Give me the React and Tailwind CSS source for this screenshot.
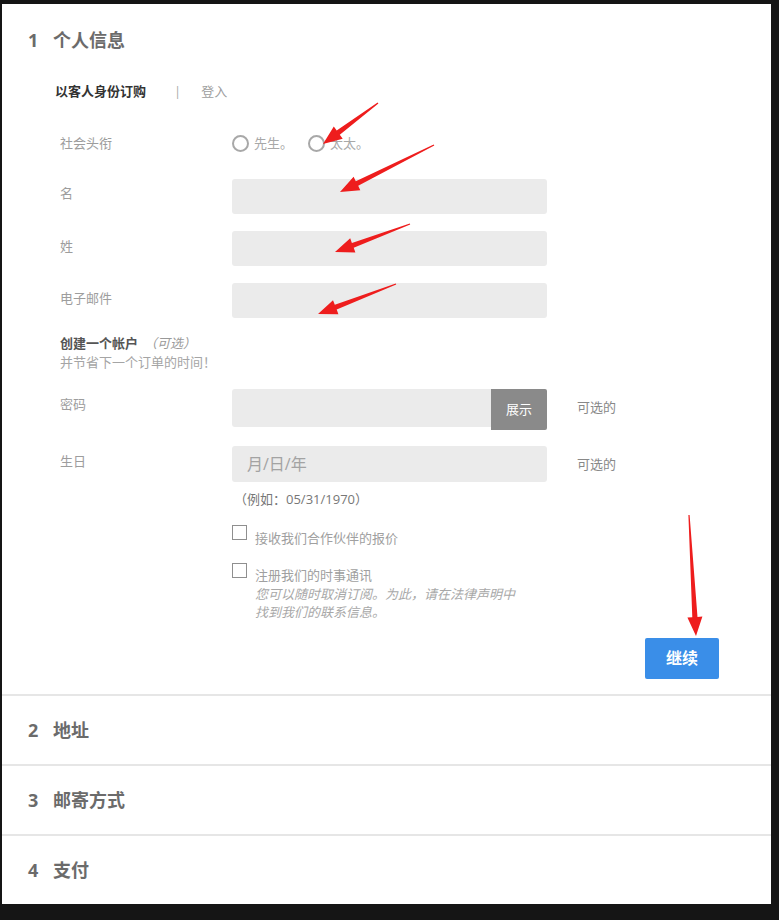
import React from 'react';

const FONT = { fontFamily: '"Open Sans", "Noto Sans CJK SC", sans-serif' };

// red annotation arrows drawn over the screenshot
const ARROWS = [
  [378, 103, 323, 144],
  [434, 145, 340, 192],
  [410, 224, 335, 252],
  [396, 284, 318, 314],
  [689, 515, 696, 636],
];

const arrowPoints = (x1, y1, x2, y2, headLen = 19, headW = 7.5, shaftW = 2.6) => {
  const dx = x2 - x1;
  const dy = y2 - y1;
  const len = Math.hypot(dx, dy);
  const ux = dx / len;
  const uy = dy / len;
  const nx = -uy;
  const ny = ux;
  const bx = x2 - ux * headLen;
  const by = y2 - uy * headLen;
  const pts = [
    [x1 + nx * 0.6, y1 + ny * 0.6],
    [bx + nx * shaftW, by + ny * shaftW],
    [bx + nx * headW, by + ny * headW],
    [x2, y2],
    [bx - nx * headW, by - ny * headW],
    [bx - nx * shaftW, by - ny * shaftW],
    [x1 - nx * 0.6, y1 - ny * 0.6],
  ];
  return pts.map(([a, b]) => `${a.toFixed(1)},${b.toFixed(1)}`).join(' ');
};

const Label = ({ children, className = '' }) => (
  <div className={`w-[172px] shrink-0 text-[13px] leading-[20px] text-[#9d9d9d] ${className}`}>{children}</div>
);

const TextField = () => (
  <div className="w-[315px] h-[35px] rounded-[3px] bg-[#ebebeb]" />
);

const Radio = ({ label }) => (
  <label className="flex items-center gap-[5px]">
    <span className="w-[17px] h-[17px] rounded-full border-2 border-[#a8a8a8]" />
    <span className="text-[13px] leading-[20px] text-[#a8a8a8]">{label}</span>
  </label>
);

const Checkbox = ({ children }) => (
  <div className="flex items-start gap-[8px]">
    <span className="w-[15px] h-[15px] shrink-0 border border-[#8f8f8f] bg-white" />
    <div className="pt-[3px] text-[13px] leading-[20px] text-[#a0a0a0]">{children}</div>
  </div>
);

const Section = ({ num, title }) => (
  <div className="h-[70px] border-t-2 border-[#e6e6e6] flex items-center pl-[26px]">
    <span className="w-[25px] text-[18px] font-bold text-[#6b6b6b]">{num}</span>
    <span className="text-[18px] font-bold text-[#6b6b6b]">{title}</span>
  </div>
);

export default function App() {
  return (
    <div className="relative w-[779px] h-[920px] bg-[#151515] pt-[4px] pl-[2px]" style={FONT}>
      <div className="w-[769px] h-[900px] bg-white flex flex-col">
        <div className="h-[690px] pt-[24px]">
          <div className="flex items-center h-[24px] pl-[26px]">
            <span className="w-[25px] text-[18px] font-bold text-[#6b6b6b]">1</span>
            <span className="text-[18px] font-bold text-[#6b6b6b]">个人信息</span>
          </div>

          <div className="mt-[30px] pl-[53px] flex items-center h-[20px] text-[13px]">
            <span className="font-bold text-[#333]">以客人身份订购</span>
            <span className="ml-[28px] mr-[20px] text-[#aaa]">|</span>
            <span className="text-[#9d9d9d]">登入</span>
          </div>

          <div className="pl-[58px]">
            <div className="mt-[31px] flex items-center h-[20px]">
              <Label>社会头衔</Label>
              <div className="flex items-center gap-[15px]">
                <Radio label="先生。" />
                <Radio label="太太。" />
              </div>
            </div>

            <div className="mt-[26px] flex items-start">
              <Label className="pt-[4px]">名</Label>
              <TextField />
            </div>
            <div className="mt-[17px] flex items-start">
              <Label className="pt-[5px]">姓</Label>
              <TextField />
            </div>
            <div className="mt-[17px] flex items-start">
              <Label className="pt-[5px]">电子邮件</Label>
              <TextField />
            </div>

            <div className="mt-[16px] text-[13px] leading-[19px]">
              <div>
                <span className="font-bold text-[#555]">创建一个帐户</span>
                <span className="ml-[6px] italic text-[#999]">（可选）</span>
              </div>
              <div className="text-[#a5a5a5]">并节省下一个订单的时间！</div>
            </div>

            <div className="mt-[17px] flex items-start">
              <Label className="pt-[5px]">密码</Label>
              <div className="flex items-start w-[315px]">
                <div className="flex-1 h-[38px] rounded-l-[3px] bg-[#ebebeb]" />
                <button className="w-[56px] h-[41px] rounded-r-[2px] bg-[#8a8a8a] text-white text-[13px]">展示</button>
              </div>
              <span className="ml-[30px] pt-[8px] text-[13px] leading-[20px] text-[#888]">可选的</span>
            </div>

            <div className="mt-[16px] flex items-start">
              <Label className="pt-[5px]">生日</Label>
              <div className="w-[315px] h-[36px] rounded-[3px] bg-[#ebebeb] flex items-center pl-[15px] text-[16px] text-[#a3a3a3]">
                月/日/年
              </div>
              <span className="ml-[30px] pt-[8px] text-[13px] leading-[20px] text-[#888]">可选的</span>
            </div>

            <div className="ml-[172px]">
              <div className="mt-[7px] h-[20px] pl-[2px] text-[13px] leading-[20px] text-[#777]">（例如：05/31/1970）</div>

              <div className="mt-[16px]">
                <Checkbox>接收我们合作伙伴的报价</Checkbox>
              </div>

              <div className="mt-[15px]">
                <Checkbox>
                  <div className="leading-[18.5px]">注册我们的时事通讯</div>
                  <div className="w-[266px] leading-[18.5px] italic text-[#a8a8a8]">
                    您可以随时取消订阅。为此，请在法律声明中找到我们的联系信息。
                  </div>
                </Checkbox>
              </div>
            </div>
          </div>

          <div className="mt-[16px] flex justify-end pr-[52px]">
            <button className="w-[74px] h-[41px] rounded-[2px] bg-[#3a8ee8] text-white text-[16px] font-bold">继续</button>
          </div>
        </div>

        <Section num="2" title="地址" />
        <Section num="3" title="邮寄方式" />
        <Section num="4" title="支付" />
      </div>

      <svg className="absolute inset-0 pointer-events-none" width="779" height="920" viewBox="0 0 779 920">
        {ARROWS.map(([x1, y1, x2, y2], i) => (
          <polygon key={i} points={arrowPoints(x1, y1, x2, y2)} fill="#ee1d1d" />
        ))}
      </svg>
    </div>
  );
}
